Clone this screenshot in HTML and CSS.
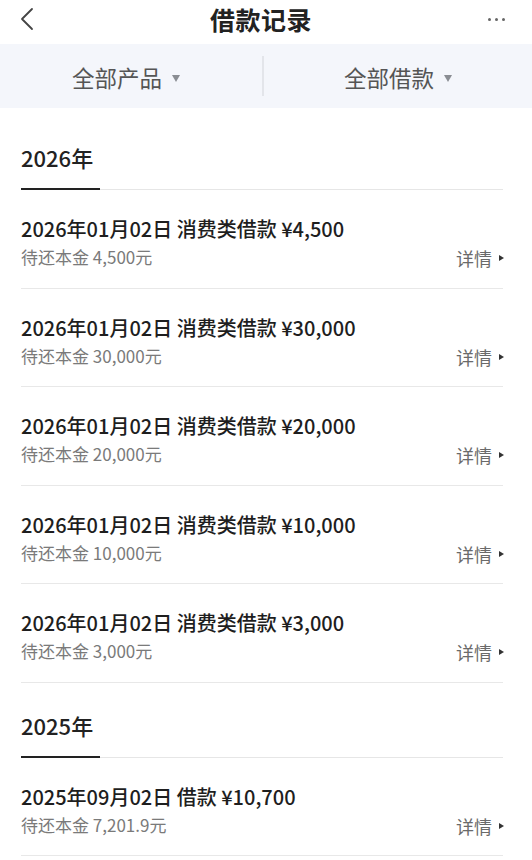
FILE: index.html
```html
<!DOCTYPE html>
<html lang="zh-CN">
<head>
<meta charset="utf-8">
<title>借款记录</title>
<link rel="stylesheet" href="styles.css">
</head>
<body>
<div class="page">
  <header class="topbar">
    <span class="back">
      <svg width="14" height="24" viewBox="0 0 14 24"><path d="M12 2 L2 12 L12 22" fill="none" stroke="#444" stroke-width="1.8" stroke-linecap="round" stroke-linejoin="round"/></svg>
    </span>
    <h1 class="title">借款记录</h1>
    <span class="more"><i></i><i></i><i></i></span>
  </header>
  <nav class="filters">
    <div class="filter left">全部产品<span class="caret"></span></div>
    <div class="divider"></div>
    <div class="filter">全部借款<span class="caret"></span></div>
  </nav>
  <section class="year first">
    <div class="year-head"><span class="year-label">2026年</span></div>
    <div class="row">
      <div class="row-main">
        <div class="row-title">2026年01月02日 消费类借款 ¥4,500</div>
        <div class="row-sub">待还本金 4,500元</div>
      </div>
      <div class="detail">详情<span class="tri"></span></div>
    </div>
    <div class="row">
      <div class="row-main">
        <div class="row-title">2026年01月02日 消费类借款 ¥30,000</div>
        <div class="row-sub">待还本金 30,000元</div>
      </div>
      <div class="detail">详情<span class="tri"></span></div>
    </div>
    <div class="row">
      <div class="row-main">
        <div class="row-title">2026年01月02日 消费类借款 ¥20,000</div>
        <div class="row-sub">待还本金 20,000元</div>
      </div>
      <div class="detail">详情<span class="tri"></span></div>
    </div>
    <div class="row">
      <div class="row-main">
        <div class="row-title">2026年01月02日 消费类借款 ¥10,000</div>
        <div class="row-sub">待还本金 10,000元</div>
      </div>
      <div class="detail">详情<span class="tri"></span></div>
    </div>
    <div class="row">
      <div class="row-main">
        <div class="row-title">2026年01月02日 消费类借款 ¥3,000</div>
        <div class="row-sub">待还本金 3,000元</div>
      </div>
      <div class="detail">详情<span class="tri"></span></div>
    </div>
  </section>
  <section class="year">
    <div class="year-head"><span class="year-label">2025年</span></div>
    <div class="row">
      <div class="row-main">
        <div class="row-title">2025年09月02日 借款 ¥10,700</div>
        <div class="row-sub">待还本金 7,201.9元</div>
      </div>
      <div class="detail">详情<span class="tri"></span></div>
    </div>
  </section>
</div>
</body>
</html>
```
FILE: styles.css
```css
* { box-sizing: border-box; }
html, body { margin: 0; padding: 0; background: #fff; }
body {
  font-family: "Noto Sans CJK SC", "Noto Sans", sans-serif;
  color: #222;
  width: 532px;
  overflow: hidden;
}
.page { width: 532px; }
.topbar {
  height: 44px;
  display: flex;
  align-items: center;
  justify-content: space-between;
  padding: 0 26px 6px 20px;
  background: #fff;
}
.back { display: flex; width: 14px; }
.title {
  margin: 0;
  font-size: 25px;
  font-weight: 700;
  color: #222;
  letter-spacing: 0.5px;
  line-height: 1;
}
.more { display: flex; gap: 4px; width: 18px; }
.more i { width: 3px; height: 3px; border-radius: 50%; background: #666; display: block; }
.filters {
  height: 64px;
  background: #f4f6fb;
  display: flex;
  align-items: center;
}
.filter {
  flex: 1;
  display: flex;
  align-items: center;
  justify-content: center;
  font-size: 22.5px;
  color: #555;
  padding-top: 2px;
}
.filter.left { flex: 0 0 262px; padding-right: 10px; }
.caret {
  width: 0; height: 0;
  border-left: 4px solid transparent;
  border-right: 4px solid transparent;
  border-top: 7px solid #8a8d93;
  margin-left: 10px;
  margin-top: 2px;
}
.divider { width: 2px; height: 40px; background: #e3e5ea; }
.year { padding: 0 29px 0 21px; }
.year-head {
  height: 75px;
  border-bottom: 1px solid #e6e6e6;
  display: flex;
  align-items: flex-end;
}
.year.first .year-head { height: 82px; }
.year-label {
  font-size: 22px;
  font-weight: 500;
  color: #222;
  line-height: 1;
  padding-bottom: 20px;
  border-bottom: 2px solid #222;
  margin-bottom: -1px;
  width: 79px;
  display: block;
}
.row {
  height: 98.5px;
  border-bottom: 1px solid #e8e8e8;
  display: flex;
  align-items: flex-start;
  justify-content: space-between;
  padding-top: 26px;
}
.row-title {
  font-size: 20px;
  font-weight: 500;
  color: #1e1e1e;
  line-height: 26px;
}
.row-sub {
  font-size: 17px;
  color: #7a7a7a;
  line-height: 22px;
  margin-top: 4px;
}
.detail {
  display: flex;
  align-items: center;
  font-size: 18px;
  color: #6a6a6a;
  margin-top: 31px;
  margin-right: -1px;
  line-height: 22px;
}
.tri {
  width: 0; height: 0;
  border-top: 3.5px solid transparent;
  border-bottom: 3.5px solid transparent;
  border-left: 5px solid #333;
  margin-left: 7px;
}
```
